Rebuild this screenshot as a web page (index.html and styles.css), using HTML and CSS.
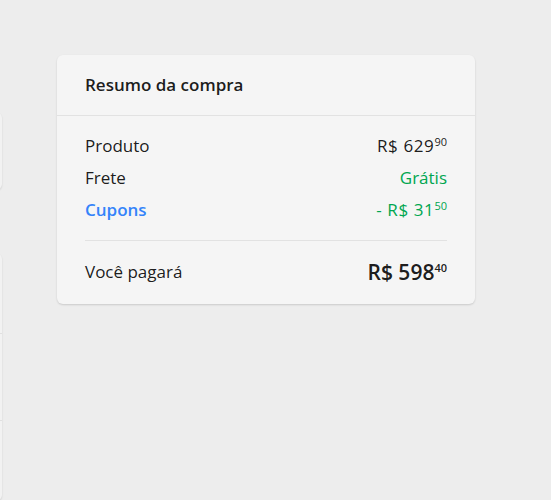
FILE: index.html
```html
<!DOCTYPE html>
<html lang="pt">

<head>
    <meta charset="UTF-8">
    <meta name="viewport" content="width=device-width, initial-scale=1.0">
    <title>Resumo da compra</title>
    <link rel="stylesheet" href="styles.css">
</head>

<body>
    <div class="page">
        <!-- Coluna da esquerda (fora da tela) -->
        <div class="left-col">
            <div class="side-card small"></div>
            <div class="side-card big">
                <div class="side-row"></div>
                <div class="side-row"></div>
                <div class="side-row"></div>
            </div>
        </div>

        <!-- Resumo -->
        <div class="summary">
            <div class="summary-header">Resumo da compra</div>
            <div class="summary-body">
                <div class="line">
                    <span>Produto</span>
                    <span class="price">R$ 629<sup>90</sup></span>
                </div>
                <div class="line">
                    <span>Frete</span>
                    <span class="green">Grátis</span>
                </div>
                <div class="line">
                    <span class="blue">Cupons</span>
                    <span class="price green">- R$ 31<sup>50</sup></span>
                </div>
                <div class="total">
                    <span>Você pagará</span>
                    <span class="total-price">R$ 598<sup>40</sup></span>
                </div>
            </div>
        </div>
    </div>
</body>

</html>
```

FILE: styles.css
```css
body {
    margin: 0;
    background-color: #ededed;
    font-family: "Open Sans", "Noto Sans", Arial, sans-serif;
    color: rgba(0, 0, 0, 0.9);
    overflow: hidden;
}

.page {
    display: flex;
    align-items: flex-start;
    gap: 55px;
    padding-top: 55px;
    height: 445px;
    overflow: hidden;
}

.left-col {
    width: 380px;
    margin-left: -378px;
    flex-shrink: 0;
}

.side-card {
    background-color: #f2f2f2;
    border-radius: 6px;
    box-shadow: 0 1px 2px rgba(0, 0, 0, 0.12);
}

.side-card.small {
    margin-top: 57px;
    height: 78px;
}

.side-card.big {
    margin-top: 63px;
}

.side-row {
    height: 80px;
    border-bottom: 1px solid #e0e0e0;
}

.side-row:nth-child(2) {
    height: 86px;
}

.side-row:last-child {
    height: 80px;
    border-bottom: none;
}

.summary {
    width: 418px;
    flex-shrink: 0;
    background-color: #f5f5f5;
    border-radius: 6px;
    box-shadow: 0 1px 2px rgba(0, 0, 0, 0.15);
}

.summary-header {
    padding: 20px 28px;
    line-height: 20px;
    font-size: 17px;
    font-weight: 600;
    border-bottom: 1px solid #e2e2e2;
}

.summary-body {
    padding: 20px 28px 20px;
}

.line {
    display: flex;
    justify-content: space-between;
    line-height: 20px;
    font-size: 17px;
    margin-bottom: 12px;
}

.line:nth-child(3) {
    margin-bottom: 0;
}

.price {
    letter-spacing: 0.6px;
}

sup {
    font-size: 11px;
    line-height: 0;
    vertical-align: 0;
    position: relative;
    top: -6px;
    letter-spacing: 0;
}

.green {
    color: #00a650;
}

.blue {
    color: #3483fa;
    font-weight: 600;
}

.total {
    display: flex;
    justify-content: space-between;
    align-items: center;
    margin-top: 20px;
    padding-top: 19px;
    border-top: 1px solid #e2e2e2;
    line-height: 24px;
    font-size: 17px;
}

.total-price {
    font-size: 21px;
    font-weight: 600;
}

.total-price sup {
    font-size: 11px;
    top: -8px;
}
```
